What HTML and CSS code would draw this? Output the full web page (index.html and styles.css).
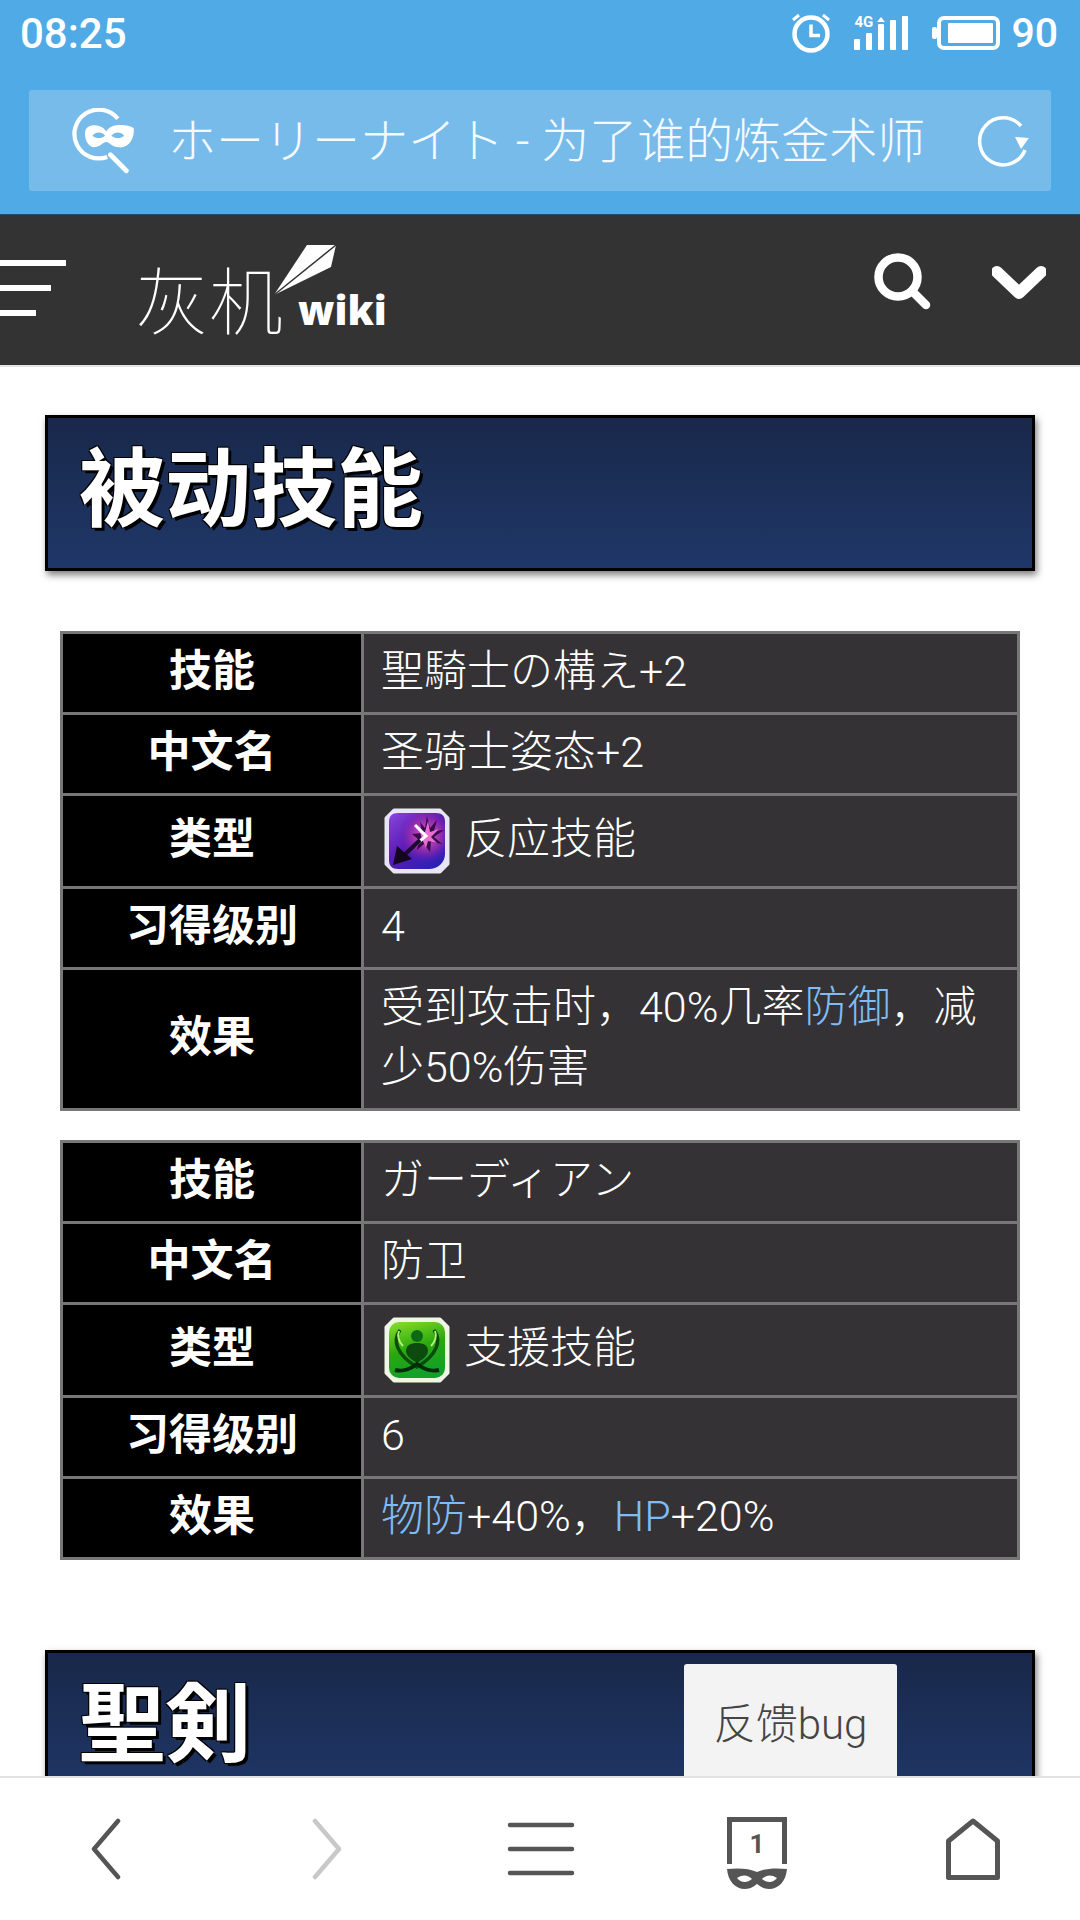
FILE: index.html
```html
<!DOCTYPE html>
<html lang="zh-CN">
<head>
    <meta charset="UTF-8">
    <meta name="viewport" content="width=device-width, initial-scale=1.0">
    <title>ホーリーナイト - 为了谁的炼金术师</title>
    <link rel="stylesheet" href="styles.css">
</head>
<body>
<div class="screen">
    <header class="browser-top">
        <div class="status-bar">
            <span class="clock">08:25</span>
            <div class="status-icons">
                <svg class="alarm" width="40" height="40" viewBox="0 0 40 40">
                    <circle cx="20" cy="21" r="16.500" fill="none" stroke="#fff" stroke-width="4.500"/>
                    <path d="M20 11.500V22.500h9" fill="none" stroke="#fff" stroke-width="3.500"/>
                    <path d="M2 7l6-5M38 7l-6-5" fill="none" stroke="#fff" stroke-width="3"/>
                </svg>
                <div class="signal">
                    <span class="signal-label">4G</span>
                    <svg width="54" height="34" viewBox="0 0 54 34">
                        <g fill="#fff">
                            <path d="M23 6l4-5 4 5z"/>
                            <rect x="0" y="23" width="6" height="11" rx="1"/>
                            <rect x="12" y="17" width="6" height="17" rx="1"/>
                            <rect x="24" y="8" width="6" height="26" rx="1"/>
                            <rect x="36" y="4" width="6" height="30" rx="1"/>
                            <rect x="48" y="0" width="6" height="34" rx="1"/>
                        </g>
                    </svg>
                </div>
                <svg class="battery" width="68" height="34" viewBox="0 0 68 34">
                    <rect x="0" y="11" width="5" height="12" rx="2" fill="#fff"/>
                    <rect x="7" y="2" width="59" height="30" rx="5" fill="none" stroke="#fff" stroke-width="4"/>
                    <rect x="16" y="7" width="45" height="20" rx="1" fill="#fff"/>
                </svg>
                <span class="battery-level">90</span>
            </div>
        </div>
        <div class="url-box">
            <svg class="url-mask" width="70" height="66" viewBox="0 0 66 62">
                <path d="M47 10A23 23 0 1 0 37 46" fill="none" stroke="#fff" stroke-width="4"/>
                <path d="M40 44l15 15" stroke="#fff" stroke-width="4.500" stroke-linecap="round"/>
                <path fill-rule="evenodd" fill="#fff" d="M16 24c0-8 8-9 14-7 3 1 5 3 6 5 1-2 3-4 6-5 6-2 16-1 20 2 1 10-5 19-14 18-6 0-9-5-12-5s-6 5-12 5c-5-1-8-7-8-13zM23 26c3-4 9-4 12 0-3 3-9 3-12 0zM41 26c3-4 9-4 12 0-3 3-9 3-12 0z"/>
            </svg>
            <span class="url-title">ホーリーナイト - 为了谁的炼金术师</span>
            <svg class="url-reload" width="56" height="56" viewBox="0 0 56 56">
                <path d="M48 35A23.500 23.500 0 1 1 44 11" fill="none" stroke="#fff" stroke-width="3.500"/>
                <path d="M44 34l-6-12 14 1z" fill="#fff"/>
            </svg>
        </div>
    </header>

    <nav class="site-nav">
        <div class="burger">
            <span class="burger-line burger-long"></span>
            <span class="burger-line burger-mid"></span>
            <span class="burger-line burger-short"></span>
        </div>
        <div class="logo">
            <span class="logo-name">灰机</span>
            <svg class="logo-plane" width="64" height="54" viewBox="0 0 64 54">
                <polygon points="1,51 34,1 63,1 58,23" fill="#fff"/>
                <path d="M1 51L63 1" stroke="#333" stroke-width="1.500"/>
            </svg>
            <span class="logo-wiki">wiki</span>
        </div>
        <svg class="nav-search" width="60" height="60" viewBox="0 0 60 60">
            <circle cx="24" cy="24" r="19.500" fill="none" stroke="#fff" stroke-width="8.500"/>
            <path d="M38 38l14 14" stroke="#fff" stroke-width="8.500" stroke-linecap="round"/>
        </svg>
        <svg class="nav-more" width="54" height="38" viewBox="0 0 54 38">
            <path d="M5 8l22 21 22-21" fill="none" stroke="#fff" stroke-width="12" stroke-linejoin="round" stroke-linecap="round"/>
        </svg>
    </nav>

    <main class="content">
        <h2 class="section-title">被动技能</h2>

        <table class="skill-table">
            <tr class="row-plain"><th>技能</th><td>聖騎士の構え+2</td></tr>
            <tr class="row-plain"><th>中文名</th><td>圣骑士姿态+2</td></tr>
            <tr class="row-icon">
                <th>类型</th>
                <td>
                    <span class="skill-type">
                        <svg class="skill-icon" width="66" height="66" viewBox="0 0 66 66">
                            <defs>
                                <linearGradient id="react-bg" x1="0" y1="0" x2="0.8" y2="1">
                                    <stop offset="0" stop-color="#8a45dc"/>
                                    <stop offset="0.5" stop-color="#5a1cb8"/>
                                    <stop offset="1" stop-color="#2b20b4"/>
                                </linearGradient>
                                <radialGradient id="react-glow" cx="0.66" cy="0.4" r="0.5">
                                    <stop offset="0" stop-color="#f070d8"/>
                                    <stop offset="0.6" stop-color="#a02ca8" stop-opacity="0.7"/>
                                    <stop offset="1" stop-color="#5a1cb8" stop-opacity="0"/>
                                </radialGradient>
                            </defs>
                            <polygon points="10,2 56,2 64,10 64,56 56,64 10,64 2,56 2,10" fill="#e8e6f4" stroke="#e8e6f4" stroke-width="3" stroke-linejoin="round"/>
                            <path d="M14 5h38c6 0 9 3 9 9v32c0 9-8 15-16 15H14c-6 0-9-3-9-9V14c0-6 3-9 9-9z" fill="url(#react-bg)"/>
                            <rect x="5" y="5" width="56" height="56" rx="12" fill="url(#react-glow)"/>
                            <polygon points="43,8 46,20 53,12 50,23 60,22 50,29 58,36 47,34 46,44 40,36 33,42 35,32 28,26 38,25 36,14 41,20" fill="#3a0a4c"/>
                            <polygon points="44,13 46,24 55,21 47,29 53,35 44,33 42,40 38,31 36,24 41,24" fill="#e86fd0"/>
                            <path d="M31 17l11 11-11 9" fill="none" stroke="#fff" stroke-width="3"/>
                            <path d="M36 32L15 52" stroke="#1c0a30" stroke-width="4"/>
                            <polygon points="9,57 13,38 28,51" fill="#14061f"/>
                        </svg>
                        反应技能
                    </span>
                </td>
            </tr>
            <tr class="row-plain"><th>习得级别</th><td>4</td></tr>
            <tr class="row-text">
                <th>效果</th>
                <td>受到攻击时，40%几率<a class="wiki-link">防御</a>，减少50%伤害</td>
            </tr>
        </table>

        <table class="skill-table">
            <tr class="row-plain"><th>技能</th><td>ガーディアン</td></tr>
            <tr class="row-plain"><th>中文名</th><td>防卫</td></tr>
            <tr class="row-icon">
                <th>类型</th>
                <td>
                    <span class="skill-type">
                        <svg class="skill-icon" width="66" height="66" viewBox="0 0 66 66">
                            <defs>
                                <linearGradient id="support-bg" x1="0" y1="0" x2="0.3" y2="1">
                                    <stop offset="0" stop-color="#8ae02c"/>
                                    <stop offset="0.55" stop-color="#2aa80c"/>
                                    <stop offset="1" stop-color="#12a028"/>
                                </linearGradient>
                            </defs>
                            <polygon points="10,2 56,2 64,10 64,56 56,64 10,64 2,56 2,10" fill="#eef6e4" stroke="#eef6e4" stroke-width="3" stroke-linejoin="round"/>
                            <rect x="5" y="5" width="56" height="56" rx="10" fill="url(#support-bg)"/>
                            <circle cx="33" cy="19" r="6" fill="#0d6a14"/>
                            <path d="M22 34c0-6 5-8 11-8s11 2 11 8c0 5-6 9-11 12-5-3-11-7-11-12z" fill="#0c4a10"/>
                            <path d="M16 13C8 24 13 38 33 50 53 38 58 24 50 13" fill="none" stroke="#0c4a10" stroke-width="3.500"/>
                            <path d="M15 14c-2 5 0 11 4 15M51 14c2 5 0 11-4 15" fill="none" stroke="#b4f080" stroke-width="2"/>
                            <path d="M11 53c8 2 14 0 22-6 8 6 14 8 22 6" fill="none" stroke="#052c08" stroke-width="4"/>
                        </svg>
                        支援技能
                    </span>
                </td>
            </tr>
            <tr class="row-plain"><th>习得级别</th><td>6</td></tr>
            <tr class="row-plain">
                <th>效果</th>
                <td><a class="wiki-link">物防</a>+40%，<a class="wiki-link">HP</a>+20%</td>
            </tr>
        </table>

        <h2 class="section-title section-next">聖剣</h2>

        <button class="feedback" type="button">反馈bug</button>
    </main>

    <footer class="bottom-bar">
        <svg class="tool-back" width="32" height="62" viewBox="0 0 32 62">
            <path d="M28 3L4 31l24 28" fill="none" stroke="#555" stroke-width="4.500" stroke-linecap="round" stroke-linejoin="round"/>
        </svg>
        <svg class="tool-forward" width="32" height="62" viewBox="0 0 32 62">
            <path d="M4 3l24 28L4 59" fill="none" stroke="#c8c8c8" stroke-width="4.500" stroke-linecap="round" stroke-linejoin="round"/>
        </svg>
        <svg class="tool-menu" width="68" height="54" viewBox="0 0 68 54">
            <path d="M3 3h62M3 27h62M3 51h62" stroke="#555" stroke-width="4.500" stroke-linecap="round"/>
        </svg>
        <div class="tool-tabs">
            <svg width="60" height="74" viewBox="0 0 60 74">
                <path d="M2.500 47V2.500h55V47" fill="none" stroke="#555" stroke-width="5"/>
                <path fill-rule="evenodd" fill="#555" d="M0 52c10-1 22-1 30 3 8-4 20-4 30-3-1 12-8 20-18 20-6 0-9-3-12-5-3 2-6 5-12 5-10 0-17-8-18-20zM10 61c6-4 11-3 15 1-5 4-11 4-15-1zM50 61c-6-4-11-3-15 1 5 4 11 4 15-1z"/>
            </svg>
            <span class="tab-count">1</span>
        </div>
        <svg class="tool-home" width="54" height="62" viewBox="0 0 54 62">
            <path d="M2.500 59.500V23L27 3l24.500 20v36.500z" fill="none" stroke="#555" stroke-width="5" stroke-linejoin="round"/>
        </svg>
    </footer>
</div>
</body>
</html>
```

FILE: styles.css
```css
* {
    box-sizing: border-box;
}
body {
    margin: 0;
    font-family: Roboto, "Noto Sans CJK SC", sans-serif;
    background-color: #ffffff;
    color: #ffffff;
}
.screen {
    width: 1080px;
    height: 1920px;
    display: flex;
    flex-direction: column;
    overflow: hidden;
}

/* browser chrome */
.browser-top {
    height: 215px;
    flex: none;
    background-color: #4faae6;
    border-bottom: 1px solid #234a68;
}
.status-bar {
    height: 90px;
    padding: 0 22px 24px 20px;
    display: flex;
    align-items: center;
    justify-content: space-between;
}
.clock {
    font-size: 42px;
    font-weight: 500;
}
.battery-level {
    margin-left: 11px;
    font-size: 41px;
    font-weight: 500;
}
.status-icons {
    display: flex;
    align-items: center;
}
.signal {
    position: relative;
    margin-left: 23px;
}
.signal svg {
    display: block;
}
.signal-label {
    position: absolute;
    left: 0;
    top: -1px;
    font-size: 15px;
    font-weight: 700;
    line-height: 15px;
}
.battery {
    margin-left: 24px;
}
.url-box {
    margin: 0 29px;
    height: 101px;
    background-color: #76bbea;
    border-radius: 3px;
    display: flex;
    align-items: center;
    padding: 0 18px 0 39px;
}
.url-title {
    flex: 1;
    margin-left: 30px;
    padding-bottom: 8px;
    font-size: 48px;
    font-weight: 300;
    white-space: nowrap;
    color: #f4faff;
}
.url-reload {
    margin-top: 4px;
}

/* site nav */
.site-nav {
    height: 152px;
    flex: none;
    background-color: #333333;
    border-bottom: 2px solid #e4e4e4;
    display: flex;
    align-items: center;
}
.burger {
    width: 66px;
    display: flex;
    flex-direction: column;
    gap: 19px;
    flex: none;
    margin-bottom: 4px;
}
.burger-line {
    display: block;
    height: 6px;
    background-color: #ffffff;
}
.burger-long {
    width: 66px;
}
.burger-mid {
    width: 51px;
}
.burger-short {
    width: 36px;
}
.logo {
    position: relative;
    margin-left: 69px;
    width: 240px;
    height: 100px;
    flex: none;
}
.logo-name {
    position: absolute;
    left: 0;
    top: 12px;
    font-family: "Noto Sans CJK SC", sans-serif;
    font-size: 74px;
    font-weight: 100;
    line-height: 90px;
}
.logo-plane {
    position: absolute;
    left: 138px;
    top: 4px;
}
.logo-wiki {
    position: absolute;
    left: 163px;
    top: 45px;
    font-family: "Open Sans", sans-serif;
    font-size: 40px;
    font-weight: 800;
    line-height: 50px;
}
.nav-search {
    margin-left: 499px;
    margin-bottom: 14px;
    flex: none;
}
.nav-more {
    margin-left: 58px;
    margin-bottom: 15px;
    flex: none;
}

/* article */
.content {
    flex: 1;
    position: relative;
    overflow: hidden;
    padding-top: 48px;
    background-color: #ffffff;
}
.section-title {
    margin: 0 45px 60px;
    height: 156px;
    padding: 0 0 0 31px;
    border: 3px solid #000000;
    background: linear-gradient(#19284a, #1f3768);
    box-shadow: 2px 4px 7px rgba(0, 0, 0, 0.5);
    font-size: 86px;
    font-weight: 700;
    line-height: 146px;
    text-shadow: 3px 3px 0 #000, -1px -1px 0 #000, 1px -1px 0 #000, -1px 1px 0 #000;
}
.section-next {
    margin-top: 90px;
    margin-bottom: 0;
}
.skill-table {
    width: 960px;
    margin: 0 60px 29px;
    border-collapse: collapse;
    table-layout: fixed;
    font-size: 43px;
    line-height: 60px;
}
.skill-table:last-of-type {
    margin-bottom: 0;
}
.skill-table th,
.skill-table td {
    border: 3px solid #777777;
}
.skill-table th {
    width: 301px;
    padding: 0 0 5px;
    background-color: #000000;
    font-weight: 700;
    text-align: center;
}
.skill-table td {
    padding: 0 20px 5px 17px;
    background-color: #343234;
    font-weight: 300;
    color: #ffffff;
}
.row-plain {
    height: 81px;
}
.row-icon {
    height: 93px;
}
.row-text {
    height: 141px;
}
.skill-type {
    display: flex;
    align-items: center;
    gap: 14px;
}
.skill-icon {
    flex: none;
    margin-left: 3px;
    margin-top: 5px;
}
.wiki-link {
    color: #7fbcf5;
}
.feedback {
    position: absolute;
    left: 684px;
    top: 1297px;
    width: 213px;
    height: 112px;
    padding: 0;
    border: none;
    border-radius: 3px 3px 0 0;
    background-color: #f3f3f3;
    color: #444444;
    font-family: Roboto, "Noto Sans CJK SC", sans-serif;
    font-size: 42px;
    font-weight: 300;
}

/* bottom toolbar */
.bottom-bar {
    height: 144px;
    flex: none;
    background-color: #ffffff;
    border-top: 2px solid #e2e2e2;
    display: flex;
    align-items: center;
    padding-left: 90px;
}
.tool-forward {
    margin-left: 189px;
}
.tool-menu {
    margin-left: 164px;
}
.tool-tabs {
    position: relative;
    margin-left: 152px;
    margin-top: 10px;
}
.tool-tabs svg {
    display: block;
}
.tab-count {
    position: absolute;
    left: 0;
    right: 0;
    top: 12px;
    text-align: center;
    color: #555555;
    font-size: 26px;
    font-weight: 700;
}
.tool-home {
    margin-left: 159px;
}
```
